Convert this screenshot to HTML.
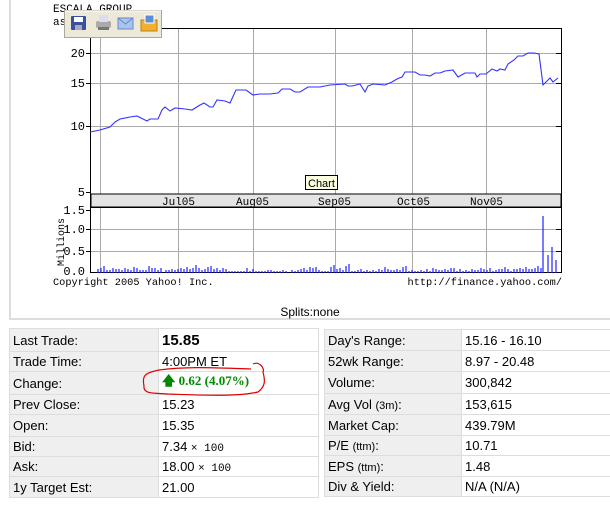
<!DOCTYPE html>
<html><head><meta charset="utf-8"><style>
body{margin:0;width:610px;height:516px;background:#fff;position:relative;overflow:hidden;font-family:"Liberation Sans",sans-serif}
.box{position:absolute;left:9px;top:-2px;width:610px;height:322px;border:2px solid #ddd;box-sizing:border-box}
.t{position:absolute;border-collapse:collapse;font-size:13px;color:#000}
.t td{border:1px solid #ddd;padding:0 0 0 3px;height:20px;box-sizing:border-box;white-space:nowrap}
.t td.l{background:#efefef}
.sm{font-size:11px}
.mono{font-family:"Liberation Mono",monospace}
</style></head><body>
<div class="box"></div>
<svg style="position:absolute;left:0;top:0" width="610" height="320" font-family="Liberation Mono,monospace" font-size="11">
<text x="53" y="12">ESCALA GROUP</text>
<text x="53" y="25">as</text>
<g stroke="#aaa" stroke-width="1">
<line x1="91" y1="53.5" x2="561" y2="53.5"/><line x1="91" y1="83.5" x2="561" y2="83.5"/><line x1="91" y1="126.5" x2="561" y2="126.5"/>
<line x1="91" y1="229.5" x2="561" y2="229.5"/><line x1="91" y1="251.5" x2="561" y2="251.5"/>
<line x1="100.5" y1="28" x2="100.5" y2="273"/><line x1="178.5" y1="28" x2="178.5" y2="273"/><line x1="253.5" y1="28" x2="253.5" y2="273"/><line x1="335.5" y1="28" x2="335.5" y2="273"/><line x1="412.5" y1="28" x2="412.5" y2="273"/><line x1="486.5" y1="28" x2="486.5" y2="273"/>
</g>
<rect x="91" y="194" width="470" height="13" fill="#e4e4e4" stroke="#000"/>
<rect x="90.5" y="28.5" width="471" height="244" fill="none" stroke="#000"/>
<line x1="90.5" y1="207.5" x2="561" y2="207.5" stroke="#000"/>
<g stroke="#000"><line x1="86" y1="53.5" x2="91" y2="53.5"/><line x1="86" y1="83.5" x2="91" y2="83.5"/><line x1="86" y1="126.5" x2="91" y2="126.5"/><line x1="86" y1="192.5" x2="91" y2="192.5"/>
<line x1="86" y1="210.5" x2="91" y2="210.5"/><line x1="86" y1="229.5" x2="91" y2="229.5"/><line x1="86" y1="251.5" x2="91" y2="251.5"/>
<line x1="556" y1="53.5" x2="561" y2="53.5"/><line x1="556" y1="83.5" x2="561" y2="83.5"/><line x1="556" y1="126.5" x2="561" y2="126.5"/><line x1="556" y1="229.5" x2="561" y2="229.5"/><line x1="556" y1="251.5" x2="561" y2="251.5"/></g>
<g text-anchor="end" font-size="12"><text x="85" y="57">20</text><text x="85" y="87">15</text><text x="85" y="130">10</text><text x="85" y="196">5</text>
<text x="85" y="214">1.5</text><text x="85" y="233">1.0</text><text x="85" y="255">0.5</text><text x="85" y="275">0.0</text></g>
<text transform="translate(64,266) rotate(-90)" font-size="10">Millions</text>
<g font-size="11"><text x="162" y="205">Jul05</text><text x="236" y="205">Aug05</text><text x="318" y="205">Sep05</text><text x="397" y="205">Oct05</text><text x="470" y="205">Nov05</text></g>
<polyline fill="none" stroke="#3333ff" stroke-width="1.1" points="90,132 100,130 110,127 115,122 120,119 130,117 137,116 147,121 150,119 158,119 162,110 165,107 170,111 175,108 185,109 192,110 200,105 204,103 210,107 213,107 217,100 225,101 230,103 236,90 246,90 253,95 260,94 270,94 278,93 282,89 290,89 295,92 300,92 308,87 320,87 330,85 345,84 348,86 352,86 360,84 365,92 368,86 373,84 385,85 392,82 397,79 402,77 405,72 415,72 420,75 425,75 430,76 435,73 440,73 445,71 453,70 458,77 465,73 475,73 477,77 480,74 486,74 492,69 497,71 500,69 505,70 508,64 514,60 518,56 523,56 528,53 534,53 539,54 543,85 550,78 553,82 558,78"/>
<g stroke="#2222ff" stroke-width="1.2">
<path d="M98 273v-4M101 273v-5M104 273v-7M107 273v-3M110 273v-3M113 273v-5M116 273v-4M119 273v-4M122 273v-3M125 273v-5M128 273v-4M131 273v-3M134 273v-6M137 273v-5M140 273v-3M143 273v-3M146 273v-3M149 273v-7M152 273v-5M155 273v-5M158 273v-3M161 273v-5M166 273v-3M169 273v-3M172 273v-4M175 273v-3M178 273v-4M181 273v-5M184 273v-4M187 273v-6M190 273v-4M193 273v-5M196 273v-8M199 273v-5M202 273v-3M205 273v-4M208 273v-6M211 273v-7M214 273v-4M217 273v-5M220 273v-3M223 273v-5M226 273v-4M229 273v-2M232 273v-2M235 273v-2M238 273v-2M241 273v-2M244 273v-2M247 273v-5M250 273v-2M253 273v-4M256 273v-2M259 273v-2M262 273v-2M265 273v-2M268 273v-3M271 273v-3M274 273v-2M277 273v-2M280 273v-2M283 273v-3M286 273v-2M292 273v-3M295 273v-2M298 273v-3M301 273v-4M304 273v-5M307 273v-3M310 273v-6M313 273v-5M316 273v-6M319 273v-3M322 273v-2M325 273v-2M328 273v-2M331 273v-6M334 273v-8M337 273v-4M340 273v-5M343 273v-3M346 273v-7M349 273v-9M352 273v-2M355 273v-2M358 273v-3M361 273v-4M364 273v-2M367 273v-3M370 273v-2M373 273v-3M376 273v-2M379 273v-4M382 273v-3M385 273v-6M388 273v-4M391 273v-3M394 273v-3M397 273v-4M400 273v-3M403 273v-6M406 273v-7M409 273v-2M412 273v-3M415 273v-2M418 273v-2M421 273v-3M424 273v-2M427 273v-4M430 273v-2M433 273v-5M436 273v-4M439 273v-3M442 273v-3M445 273v-4M448 273v-3M451 273v-5M454 273v-5M457 273v-2M460 273v-4M463 273v-2M466 273v-3M469 273v-2M472 273v-4M475 273v-3M478 273v-3M481 273v-5M484 273v-4M487 273v-3M490 273v-5M493 273v-2M496 273v-3M499 273v-4M502 273v-4M505 273v-6M508 273v-4M511 273v-2M514 273v-4M517 273v-4M520 273v-5M523 273v-4M526 273v-6M529 273v-4M532 273v-4M535 273v-5M538 273v-7M541 273v-5M543 273v-57M548 273v-18M552 273v-26M556 273v-13"/>
</g>
<text x="53" y="285" font-size="10.3">Copyright 2005 Yahoo! Inc.</text>
<text x="562" y="285" font-size="10.3" text-anchor="end">http://finance.yahoo.com/</text>
<text x="310" y="316" font-family="Liberation Sans,sans-serif" font-size="12" text-anchor="middle">Splits:none</text>
<rect x="305.5" y="175.5" width="32" height="14" fill="#ffffe1" stroke="#000"/>
<text x="308" y="187" font-family="Liberation Sans,sans-serif" font-size="11">Chart</text>
<rect x="64.5" y="10.5" width="97" height="27" fill="#ece9d8" stroke="#aca899"/>
<line x1="65" y1="11" x2="161" y2="11" stroke="#fff"/>
<rect x="71" y="16" width="15" height="14" fill="#3a4fa0" rx="1"/><rect x="74" y="17" width="9" height="5" fill="#fff"/><rect x="75" y="25" width="7" height="5" fill="#aab"/>
<rect x="96" y="21" width="15" height="7" fill="#aaa" rx="2"/><rect x="99" y="15" width="9" height="7" fill="#dde"/><rect x="98" y="27" width="11" height="3" fill="#777"/>
<rect x="118" y="18" width="15" height="11" fill="#a9c4ee" stroke="#6a88c8"/><path d="M118 18l7.5 6 7.5-6" fill="none" stroke="#6a88c8"/>
<rect x="141" y="20" width="16" height="11" fill="#f0b030" stroke="#c08010"/><rect x="145" y="15" width="9" height="8" fill="#5b8fd6" stroke="#fff"/>
</svg>
<table class="t" style="left:9px;top:328px;width:310px">
<tr><td class="l" style="width:149px;height:23px">Last Trade:</td><td style="font-weight:bold;font-size:15px">15.85</td></tr>
<tr><td class="l">Trade Time:</td><td>4:00PM ET</td></tr>
<tr><td class="l" style="height:22px">Change:</td><td style="color:#008800;font-weight:bold;font-family:'Liberation Serif',serif;font-size:13px">&#129093; 0.62 (4.07%)</td></tr>
<tr><td class="l">Prev Close:</td><td>15.23</td></tr>
<tr><td class="l" style="height:22px">Open:</td><td>15.35</td></tr>
<tr><td class="l">Bid:</td><td>7.34 <span class="sm mono">× 100</span></td></tr>
<tr><td class="l">Ask:</td><td>18.00 <span class="sm mono">× 100</span></td></tr>
<tr><td class="l" style="height:21px">1y Target Est:</td><td>21.00</td></tr>
</table>
<table class="t" style="left:324px;top:329px;width:300px">
<tr><td class="l" style="width:137px;height:21px">Day's Range:</td><td>15.16 - 16.10</td></tr>
<tr><td class="l" style="height:21px">52wk Range:</td><td>8.97 - 20.48</td></tr>
<tr><td class="l" style="height:22px">Volume:</td><td>300,842</td></tr>
<tr><td class="l" style="height:21px">Avg Vol <span class="sm">(3m)</span>:</td><td>153,615</td></tr>
<tr><td class="l" style="height:21px">Market Cap:</td><td>439.79M</td></tr>
<tr><td class="l">P/E <span class="sm">(ttm)</span>:</td><td>10.71</td></tr>
<tr><td class="l" style="height:21px">EPS <span class="sm">(ttm)</span>:</td><td>1.48</td></tr>
<tr><td class="l">Div &amp; Yield:</td><td>N/A (N/A)</td></tr>
</table>
<svg style="position:absolute;left:0;top:0;pointer-events:none" width="610" height="516">
<path d="M253 364c6-3 12 4 10 8c2 8 3 14-5 20c-20 5-60 3-90 2c-15-1-25 0-24-8c-2-10 0-13 15-16c30-4 60-2 92-1" fill="none" stroke="#e00000" stroke-width="1.2"/>
</svg>
</body></html>
